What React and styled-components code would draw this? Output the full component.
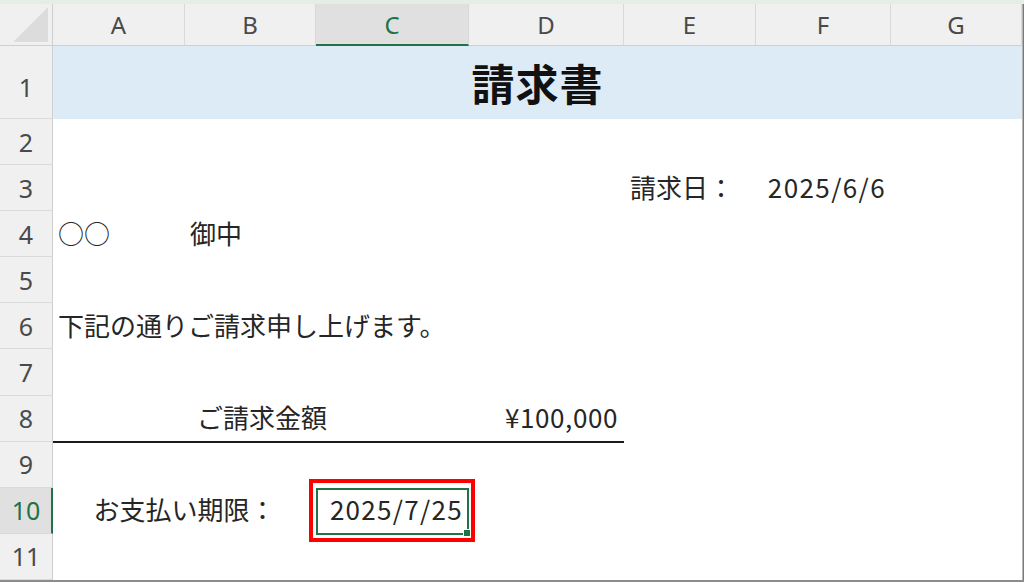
import React from "react";
import styled, { createGlobalStyle } from "styled-components";

const Global = createGlobalStyle`
  html, body { margin: 0; padding: 0; background: #ffffff; }
  body { width: 1024px; height: 583px; overflow: hidden; }
`;

const COLS = [132, 131, 153, 155, 132, 135, 131];
const LETTERS = ["A", "B", "C", "D", "E", "F", "G"];
const SELECTED_COL = 2;
const SELECTED_ROW = 10;

const Page = styled.div`
  width: 1024px;
  height: 583px;
  background: #ffffff;
  display: flex;
  flex-direction: column;
  overflow: hidden;
`;

const TopStrip = styled.div`
  height: 4px;
  background: #e4eee6;
  flex: none;
`;

const Sheet = styled.div`
  display: grid;
  grid-template-columns: 53px ${COLS.map((c) => c + "px").join(" ")} 2px;
  grid-template-rows: 42px 73px repeat(10, 46.1px);
  border-bottom: 2px solid #8c8c8c;
  width: 1024px;
  font-family: "Noto Sans CJK JP", "Noto Sans", sans-serif;
`;

const Corner = styled.div`
  grid-column: 1;
  grid-row: 1;
  background: #f0f0f0;
  border-right: 1px solid #cfcfcf;
  border-bottom: 1px solid #cfcfcf;
  position: relative;
  box-sizing: border-box;
`;

const CornerTriangle = styled.svg`
  position: absolute;
  right: 3px;
  bottom: 2px;
`;

const ColHeader = styled.div`
  grid-row: 1;
  grid-column: ${(p) => p.$col};
  box-sizing: border-box;
  background: ${(p) => (p.$active ? "#e0e0e0" : "#f0f0f0")};
  border-right: 1px solid #d9d9d9;
  border-bottom: ${(p) => (p.$active ? "2px solid #217346" : "1px solid #cfcfcf")};
  color: ${(p) => (p.$active ? "#217346" : "#4a4a4a")};
  font-family: "Noto Sans", "Open Sans", sans-serif;
  font-size: 24px;
  display: flex;
  align-items: center;
  justify-content: center;
  padding-top: ${(p) => (p.$active ? "1px" : "0")};
`;

const RightEdge = styled.div`
  grid-column: 9;
  grid-row: 1 / span 12;
  background: #7a7a7a;
  border-left: 1px solid #b5b5b5;
  box-sizing: border-box;
`;

const RowHeader = styled.div`
  grid-column: 1;
  grid-row: ${(p) => p.$row};
  box-sizing: border-box;
  background: ${(p) => (p.$active ? "#e0e0e0" : "#f0f0f0")};
  border-right: ${(p) => (p.$active ? "2px solid #217346" : "1px solid #cfcfcf")};
  border-bottom: 1px solid #dadada;
  color: ${(p) => (p.$active ? "#217346" : "#4a4a4a")};
  font-family: "Noto Sans", "Open Sans", sans-serif;
  font-size: 25px;
  display: flex;
  align-items: center;
  justify-content: center;
  padding-left: ${(p) => (p.$active ? "1px" : "0")};
  padding-top: ${(p) => (p.$tall ? "9px" : "0")};
`;

const TitleBand = styled.div`
  grid-column: 2 / span 7;
  grid-row: 2;
  background: #ddebf7;
  display: flex;
  align-items: center;
  justify-content: center;
  font-size: 43px;
  font-weight: 700;
  color: #111111;
  letter-spacing: 1px;
  padding-bottom: 1px;
`;

const Cell = styled.div`
  grid-column: ${(p) => p.$col};
  grid-row: ${(p) => p.$row};
  display: flex;
  align-items: center;
  justify-content: ${(p) =>
    p.$align === "right" ? "flex-end" : p.$align === "center" ? "center" : "flex-start"};
  padding: 0 ${(p) => p.$padR ?? 6}px 4px ${(p) => p.$padL ?? 6}px;
  font-size: 26px;
  color: #262626;
  white-space: nowrap;
  min-width: 0;
  position: relative;
  box-sizing: border-box;
  letter-spacing: ${(p) => p.$spacing || "0px"};
`;

const Underline = styled.div`
  grid-column: 2 / span 4;
  grid-row: 9;
  border-bottom: 2px solid #1a1a1a;
  align-self: end;
  margin-bottom: -1px;
`;

const Selection = styled.div`
  position: absolute;
  inset: 0 0 -1px 0;
  border: 2px solid #217346;
  pointer-events: none;
`;

const Handle = styled.div`
  position: absolute;
  right: -4px;
  bottom: -4px;
  width: 6px;
  height: 6px;
  background: #217346;
  border: 1px solid #ffffff;
`;

const Highlight = styled.div`
  position: absolute;
  left: -7px;
  right: -6px;
  top: -9px;
  bottom: -8px;
  border: 4px solid #ff0000;
  pointer-events: none;
`;

export default function App() {
  const rows = [1, 2, 3, 4, 5, 6, 7, 8, 9, 10, 11];
  return (
    <Page>
      <Global />
      <TopStrip />
      <Sheet>
        <Corner>
          <CornerTriangle width="36" height="36" viewBox="0 0 36 36">
            <polygon points="0,35 35,35 35,0" fill="#dcdcdc" />
          </CornerTriangle>
        </Corner>
        {LETTERS.map((l, i) => (
          <ColHeader key={l} $col={i + 2} $active={i === SELECTED_COL}>
            {l}
          </ColHeader>
        ))}
        <RightEdge />
        {rows.map((r) => (
          <RowHeader key={r} $row={r + 1} $active={r === SELECTED_ROW} $tall={r === 1}>
            {r}
          </RowHeader>
        ))}

        <TitleBand>請求書</TitleBand>

        <Cell $col={6} $row={4}>請求日：</Cell>
        <Cell $col={7} $row={4} $align="right" $spacing="1.4px" $padR={5}>2025/6/6</Cell>

        <Cell $col={2} $row={5} $padL={5}>○○</Cell>
        <Cell $col={3} $row={5} $padL={5}>御中</Cell>

        <Cell $col="2 / span 4" $row={7} $padL={5}>下記の通りご請求申し上げます。</Cell>

        <Cell $col={3} $row={9} $padL={12}>ご請求金額</Cell>
        <Cell $col={5} $row={9} $align="right" $padR={6} $spacing="0.6px">¥100,000</Cell>
        <Underline />

        <Cell $col="2 / span 2" $row={11} $align="center">お支払い期限：</Cell>
        <Cell $col={4} $row={11} $align="right" $padR={6} $spacing="1.3px">
          2025/7/25
          <Selection>
            <Handle />
          </Selection>
          <Highlight />
        </Cell>
      </Sheet>
    </Page>
  );
}
